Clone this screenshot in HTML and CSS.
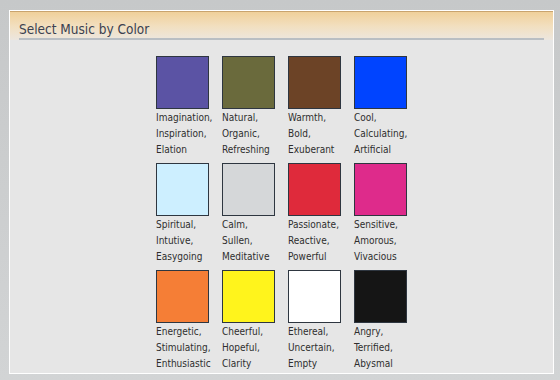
FILE: index.html
```html
<!DOCTYPE html>
<html lang="en">

<head>
    <meta charset="UTF-8">
    <title>Select Music by Color</title>
    <link rel="stylesheet" href="styles.css">
</head>

<body>

    <div class="panel">

        <!-- Cabecera -->
        <div class="panel-header">
            <h2>Select Music by Color</h2>
        </div>

        <!-- Colores -->
        <div class="color-grid">
            <div class="color-item">
                <div class="swatch purple"></div>
                <p>Imagination,<br>Inspiration,<br>Elation</p>
            </div>
            <div class="color-item">
                <div class="swatch olive"></div>
                <p>Natural,<br>Organic,<br>Refreshing</p>
            </div>
            <div class="color-item">
                <div class="swatch brown"></div>
                <p>Warmth,<br>Bold,<br>Exuberant</p>
            </div>
            <div class="color-item">
                <div class="swatch blue"></div>
                <p>Cool,<br>Calculating,<br>Artificial</p>
            </div>

            <div class="color-item">
                <div class="swatch light-blue"></div>
                <p>Spiritual,<br>Intutive,<br>Easygoing</p>
            </div>
            <div class="color-item">
                <div class="swatch gray"></div>
                <p>Calm,<br>Sullen,<br>Meditative</p>
            </div>
            <div class="color-item">
                <div class="swatch red"></div>
                <p>Passionate,<br>Reactive,<br>Powerful</p>
            </div>
            <div class="color-item">
                <div class="swatch pink"></div>
                <p>Sensitive,<br>Amorous,<br>Vivacious</p>
            </div>

            <div class="color-item">
                <div class="swatch orange"></div>
                <p>Energetic,<br>Stimulating,<br>Enthusiastic</p>
            </div>
            <div class="color-item">
                <div class="swatch yellow"></div>
                <p>Cheerful,<br>Hopeful,<br>Clarity</p>
            </div>
            <div class="color-item">
                <div class="swatch white"></div>
                <p>Ethereal,<br>Uncertain,<br>Empty</p>
            </div>
            <div class="color-item">
                <div class="swatch black"></div>
                <p>Angry,<br>Terrified,<br>Abysmal</p>
            </div>
        </div>

    </div>

</body>

</html>
```

FILE: styles.css
```css
body {
    margin: 0;
    padding: 10px 6px 6px 9px;
    font-family: "DejaVu Sans Condensed", "DejaVu Sans", Tahoma, sans-serif;
    background: linear-gradient(to bottom, #c6c8c9, #d2d4d5);
}

.panel {
    height: 362px;
    background-color: #e6e6e6;
    border: 1px solid #ffffff;
}

.panel-header {
    height: 28px;
    margin-bottom: 16px;
    padding: 0 9px;
    border-top: 1px solid #c9a46e;
    background: linear-gradient(to bottom, #f0d09a, #f2dfbf 50%, #ece6df);
}

.panel-header h2 {
    margin: 0;
    padding-top: 9px;
    height: 17px;
    font-family: "DejaVu Sans Condensed", "DejaVu Sans", Tahoma, sans-serif;
    font-size: 13.5px;
    font-weight: normal;
    line-height: 17px;
    color: #3b4150;
    border-bottom: 2px solid #b9bec3;
}

.color-grid {
    display: grid;
    grid-template-columns: repeat(4, 53px);
    column-gap: 13px;
    row-gap: 5px;
    justify-content: center;
}

.swatch {
    width: 51px;
    height: 51px;
    border: 1px solid #2e3640;
}

.color-item p {
    margin: 1px 0 0 0;
    font-size: 10px;
    line-height: 16px;
    color: #2e2e2e;
    white-space: nowrap;
}

.purple { background-color: #5b53a4; }
.olive { background-color: #6a6a3c; }
.brown { background-color: #6c4326; }
.blue { background-color: #0044ff; }
.light-blue { background-color: #cdefff; }
.gray { background-color: #d5d7d9; }
.red { background-color: #df2a3b; }
.pink { background-color: #de2b8b; }
.orange { background-color: #f57e36; }
.yellow { background-color: #fff41c; }
.white { background-color: #ffffff; }
.black { background-color: #151515; }
```
